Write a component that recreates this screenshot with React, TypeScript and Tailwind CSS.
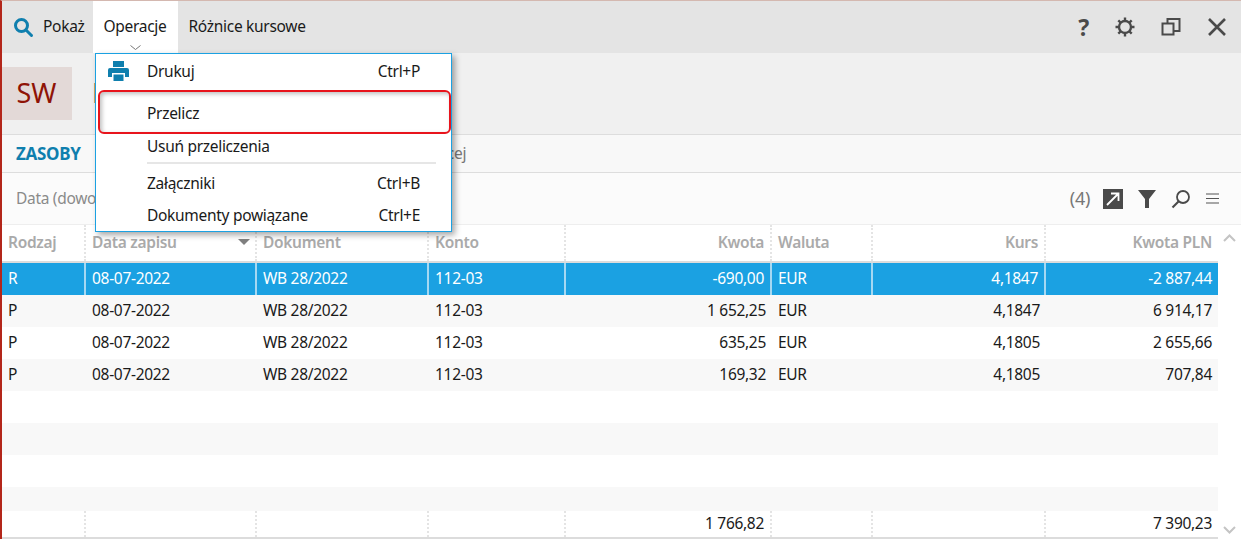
import React from "react";

const cols = "grid grid-cols-[84px_171px_172px_137px_206px_101px_173px_172px]";
const rows = [
  ["R", "08-07-2022", "WB 28/2022", "112-03", "-690,00", "EUR", "4,1847", "-2 887,44"],
  ["P", "08-07-2022", "WB 28/2022", "112-03", "1 652,25", "EUR", "4,1847", "6 914,17"],
  ["P", "08-07-2022", "WB 28/2022", "112-03", "635,25", "EUR", "4,1805", "2 655,66"],
  ["P", "08-07-2022", "WB 28/2022", "112-03", "169,32", "EUR", "4,1805", "707,84"],
];
const heads = ["Rodzaj", "Data zapisu", "Dokument", "Konto", "Kwota", "Waluta", "Kurs", "Kwota PLN"];
const right = [4, 6, 7];

function MenuItem({ label, shortcut, h }: { label: string; shortcut?: string; h: string }) {
  return (
    <div className={`flex items-center justify-between pl-[51px] pr-[31px] ${h}`}>
      <span>{label}</span>
      {shortcut && <span>{shortcut}</span>}
    </div>
  );
}

export default function App() {
  return (
    <div className="relative flex h-[539px] w-[1241px] flex-col overflow-hidden border-l-2 border-t border-l-[#b3261a] border-t-[#d4b8b0] bg-white text-[15.5px] tracking-[-0.3px] text-[#1a1a1a] [font-family:'Noto_Sans',sans-serif]">
      <div className="flex h-[52px] shrink-0 items-stretch bg-[#e4e4e4]">
        <div className="flex items-center pl-[10px] pr-[8px]">
          <svg width="22" height="22" viewBox="0 0 22 22" fill="none" stroke="#0f7fae" strokeWidth="3">
            <circle cx="9.5" cy="9.5" r="6" />
            <path d="M14 14l5.5 5.5" strokeLinecap="round" />
          </svg>
          <span className="ml-[9px]">Pokaż</span>
        </div>
        <div className="relative flex w-[85px] items-center justify-center bg-white">
          <span>Operacje</span>
          <svg className="absolute bottom-[3px] left-[37px]" width="11" height="5" viewBox="0 0 11 5" fill="none" stroke="#777" strokeWidth="1">
            <path d="M0.5 0.5l5 4 5-4" />
          </svg>
        </div>
        <div className="flex items-center pl-[11px]">Różnice kursowe</div>
        <div className="ml-auto flex items-center text-[#4a4a4a]">
          <span className="mr-[25px] text-[23px] font-bold leading-none">?</span>
          <svg className="mr-[25px]" width="22" height="22" viewBox="0 0 22 22" fill="none" stroke="#4a4a4a" strokeWidth="2.4">
            <circle cx="11" cy="11" r="6" />
            <path d="M11 1.5v3M11 17.5v3M1.5 11h3M17.5 11h3M4.3 4.3l2.2 2.2M15.5 15.5l2.2 2.2M4.3 17.7l2.2-2.2M15.5 6.5l2.2-2.2" />
          </svg>
          <svg className="mr-[26px]" width="20" height="20" viewBox="0 0 20 20" fill="none" stroke="#4a4a4a" strokeWidth="2">
            <rect x="1.5" y="6.5" width="11" height="11" />
            <path d="M6.5 6.5v-4.5h12v12h-6" />
          </svg>
          <svg className="mr-[14px]" width="20" height="20" viewBox="0 0 20 20" fill="none" stroke="#4a4a4a" strokeWidth="2.6">
            <path d="M2 2l16 16M18 2L2 18" />
          </svg>
        </div>
      </div>

      <div className="flex h-[81px] shrink-0 items-center bg-[#f0f0f0] pb-[merge]">
        <div className="ml-[-1px] flex h-[53px] w-[71px] items-center justify-center bg-[#e3d9d7] text-[27px] tracking-normal text-[#8f1306]">SW</div>
        <span className="ml-[20px] text-[27px] text-[#333]">Księgowanie</span>
      </div>

      <div className="flex h-[38px] shrink-0 items-center border-t border-[#dddddd] bg-[#f8f8f8]">
        <span className="ml-[14px] text-[17px] font-bold text-[#0f7fae]">ZASOBY</span>
        <span className="ml-[340px] text-[#777]">Więcej</span>
      </div>

      <div className="flex h-[52px] shrink-0 items-center border-t border-[#dddddd] bg-[#fbfbfb] text-[#8a8a8a]">
        <span className="ml-[14px]">Data (dowodu)</span>
        <div className="ml-auto flex items-center">
          <span className="mr-[13px] text-[18px] text-[#777]">(4)</span>
          <svg className="mr-[15px]" width="20" height="20" viewBox="0 0 20 20">
            <rect width="20" height="20" fill="#4a4a4a" />
            <path d="M4 16L15 5M8 4.5h7.5V12" fill="none" stroke="#fff" strokeWidth="1.8" />
          </svg>
          <svg className="mr-[15px]" width="18" height="20" viewBox="0 0 18 20">
            <path d="M0 1h18L11 10v9H7v-9z" fill="#4a4a4a" />
          </svg>
          <svg className="mr-[15px]" width="20" height="20" viewBox="0 0 20 20" fill="none" stroke="#4a4a4a" strokeWidth="1.8">
            <circle cx="12" cy="8" r="6" />
            <path d="M7.5 12.5L1.5 18.5" strokeWidth="2.2" />
          </svg>
          <svg className="mr-[22px]" width="13" height="11" viewBox="0 0 13 11" stroke="#555" strokeWidth="1.2">
            <path d="M0 1h13M0 5.500h13M0 10h13" />
          </svg>
        </div>
      </div>

      <div className="flex min-h-0 flex-1 border-t border-[#eeeeee]">
        <div className="flex w-[1216px] flex-col">
          <div className={`${cols} h-[38px] shrink-0 border-b-2 border-[#dcdcdc] bg-white font-semibold text-[#aaaaaa]`}>
            {heads.map((h, i) => (
              <div key={h} className={`relative flex items-center px-[6px] ${i < 7 ? "border-r-2 border-dotted border-[#e4e4e4]" : ""} ${right.includes(i) ? "justify-end" : ""}`}>
                {h}
                {i === 1 && <span className="absolute right-[5px] top-[14px] h-0 w-0 border-x-[6px] border-t-[6px] border-x-transparent border-t-[#808080]" />}
              </div>
            ))}
          </div>
          {rows.map((r, ri) => (
            <div key={ri} className={`${cols} h-[32px] shrink-0 ${ri === 0 ? "bg-[#1ba1e2] text-white" : ri % 2 === 1 ? "bg-[#f8f8f8]" : "bg-white"}`}>
              {r.map((c, i) => (
                <div key={i} className={`flex items-center px-[6px] ${ri === 0 && i < 7 ? "border-r-2 border-[#a5d8f2]" : ""} ${right.includes(i) ? "justify-end" : ""}`}>{c}</div>
              ))}
            </div>
          ))}
          <div className="h-[32px] shrink-0 bg-white" />
          <div className="h-[32px] shrink-0 bg-[#f8f8f8]" />
          <div className="h-[32px] shrink-0 bg-white" />
          <div className="h-[24px] shrink-0 bg-[#f8f8f8]" />
          <div className={`${cols} min-h-0 flex-1 border-b-2 border-[#dcdcdc] bg-white`}>
            {["", "", "", "", "1 766,82", "", "", "7 390,23"].map((c, i) => (
              <div key={i} className={`flex items-center justify-end px-[6px] ${i < 7 ? "border-r-2 border-dotted border-[#e4e4e4]" : ""}`}>{c}</div>
            ))}
          </div>
        </div>
        <div className="flex flex-1 flex-col items-center justify-between pb-[5px] pt-[9px]">
          <svg width="13" height="8" viewBox="0 0 13 8" fill="none" stroke="#c4c4c4" strokeWidth="2"><path d="M1 7l5.500-5.500L12 7" /></svg>
          <svg width="13" height="8" viewBox="0 0 13 8" fill="none" stroke="#c4c4c4" strokeWidth="2"><path d="M1 1l5.500 5.500L12 1" /></svg>
        </div>
      </div>

      <div className="absolute left-[93px] top-[52px] flex h-[179px] w-[357px] flex-col border border-[#1ba1e2] bg-white shadow-[3px_3px_6px_rgba(0,0,0,0.35)]">
        <div className="relative">
          <svg className="absolute left-[12px] top-[7px]" width="21" height="20" viewBox="0 0 21 20">
            <path d="M5 0h11v6H5zM2 7h17a2 2 0 0 1 2 2v7h-4v-4H4v4H0V9a2 2 0 0 1 2-2zM5.500 13.500h10V20h-10z" fill="#0f7fae" />
          </svg>
          <MenuItem label="Drukuj" shortcut="Ctrl+P" h="h-[35px]" />
        </div>
        <MenuItem label="Przelicz" h="h-[47px] pt-[2px]" />
        <MenuItem label="Usuń przeliczenia" h="h-[26px] pb-[4px]" />
        <div className="ml-[51px] mr-[15px] h-[2px] bg-[#e6e6e6]" />
        <MenuItem label="Załączniki" shortcut="Ctrl+B" h="h-[36px] pt-[3px]" />
        <MenuItem label="Dokumenty powiązane" shortcut="Ctrl+E" h="h-[31px]" />
      </div>
      <div className="absolute left-[96px] top-[89px] h-[44px] w-[353px] rounded-[6px] border-2 border-[#e8141c] shadow-[inset_2px_2px_4px_rgba(0,0,0,0.25)]" />
    </div>
  );
}
